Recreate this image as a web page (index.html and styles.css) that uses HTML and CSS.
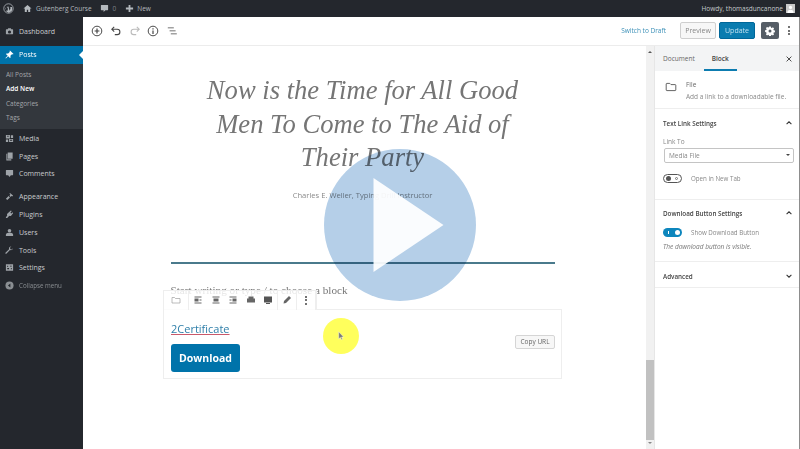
FILE: index.html
```html
<!DOCTYPE html>
<html lang="en">
<head>
    <meta charset="UTF-8">
    <title>Edit Post - Gutenberg Course</title>
    <link rel="stylesheet" href="styles.css">
</head>
<body>
    <div class="page">
        <header class="adminbar">
            <svg class="bar-icon wp" viewBox="0 0 20 20"><circle cx="10" cy="10" r="8.6" fill="none" stroke="currentColor" stroke-width="1.4"/><path d="M3.6 7.5 7 16.6l2-5.6-1.2-3.5H6.7V6.600h4.400v.9h-1.200l2.300 6.800 1.500-4.800c.3-1.200-.4-1.800-1-2.400h3.300c1 1.800 1.300 4.500-.2 7.300L11 17.800H9.400L8.900 17 3.600 10z" fill="currentColor"/></svg>
            <svg class="bar-icon home" viewBox="0 0 20 20"><path d="M10 2 1 10h3v8h4.500v-5h3v5H16v-8h3z" fill="currentColor"/></svg>
            <span class="bar-text site">Gutenberg Course</span>
            <svg class="bar-icon bubble" viewBox="0 0 20 20"><path d="M3 2h14a1 1 0 0 1 1 1v10a1 1 0 0 1-1 1h-5l-4 4v-4H3a1 1 0 0 1-1-1V3a1 1 0 0 1 1-1z" fill="currentColor"/></svg>
            <span class="bar-text count">0</span>
            <svg class="bar-icon plus" viewBox="0 0 20 20"><path d="M8 2h4v6h6v4h-6v6H8v-6H2V8h6z" fill="currentColor"/></svg>
            <span class="bar-text">New</span>
            <span class="howdy">Howdy, thomasduncanone</span>
            <span class="avatar"><svg viewBox="0 0 20 20"><circle cx="10" cy="7.500" r="3.500" fill="#fff"/><path d="M3 20c0-6 3-7.500 7-7.500s7 1.500 7 7.500z" fill="#fff"/></svg></span>
        </header>

        <div class="workspace">
            <nav class="adminmenu">
                <a class="menu-item">
                    <svg viewBox="0 0 20 20"><path d="M3 5h3l1-2h6l1 2h3a1 1 0 0 1 1 1v9a1 1 0 0 1-1 1H3a1 1 0 0 1-1-1V6a1 1 0 0 1 1-1zm7 2.500a3.500 3.500 0 1 0 0 7 3.500 3.500 0 0 0 0-7z" fill="currentColor"/></svg>
                    Dashboard
                </a>
                <a class="menu-item active">
                    <svg viewBox="0 0 20 20"><path d="M11 1l8 8-2 1-1-1-4 4 .5 3.500-1.500 1.500-4-4-5 5-1-1 5-5-4-4 1.500-1.500L7 8l4-4-1-1z" fill="currentColor"/></svg>
                    Posts
                </a>
                <div class="submenu">
                    <a>All Posts</a>
                    <a class="current">Add New</a>
                    <a>Categories</a>
                    <a>Tags</a>
                </div>
                <a class="menu-item">
                    <svg viewBox="0 0 20 20"><path d="M2 2h9v8H2zm3 2v2h3V4zM9 11h9v7H9zm2 2v2h5v-2zM13 3h5v6h-5zM2 12h5v6H2z" fill="currentColor"/></svg>
                    Media
                </a>
                <a class="menu-item">
                    <svg viewBox="0 0 20 20"><path d="M6 1h11v14H6zM3 4h2v12h9v3H3z" fill="currentColor"/></svg>
                    Pages
                </a>
                <a class="menu-item">
                    <svg viewBox="0 0 20 20"><path d="M3 2h14a1 1 0 0 1 1 1v10a1 1 0 0 1-1 1h-4l-3 4-3-4H3a1 1 0 0 1-1-1V3a1 1 0 0 1 1-1z" fill="currentColor"/></svg>
                    Comments
                </a>
                <a class="menu-item group-start">
                    <svg viewBox="0 0 20 20"><path d="M11 2l7 6-2 2-2-1-2 2-2-3 2-2-2-2zM8 9l3 3-6 6-3-3z" fill="currentColor"/></svg>
                    Appearance
                </a>
                <a class="menu-item">
                    <svg viewBox="0 0 20 20"><path d="M13 1l2 1-3 4 2 2 3-3 1 2-4 5c-1 1.500-3 2-4.500 1L5 18H2v-2l3-4c-1-2-.5-3.500.5-4.500z" fill="currentColor"/></svg>
                    Plugins
                </a>
                <a class="menu-item">
                    <svg viewBox="0 0 20 20"><circle cx="10" cy="6" r="4" fill="currentColor"/><path d="M2 18v-3c0-3 3-4 5-4.500h6c2 .5 5 1.500 5 4.500v3z" fill="currentColor"/></svg>
                    Users
                </a>
                <a class="menu-item">
                    <svg viewBox="0 0 20 20"><path d="M18 5l-3 3-3-1-1-3 3-3c-3-.5-6 2-5 6l-8 8c-1 2 1 3 2 2l8-8c4 1 7-2 7-4z" fill="currentColor"/></svg>
                    Tools
                </a>
                <a class="menu-item">
                    <svg viewBox="0 0 20 20"><path d="M2 3h16v14H2zm3 3v3h2V6zm6 0v2h4V6zM5 11v3h4v-3zm8 0v3h2v-3z" fill="currentColor" fill-rule="evenodd"/></svg>
                    Settings
                </a>
                <a class="menu-item collapse">
                    <svg viewBox="0 0 20 20"><circle cx="10" cy="10" r="9" fill="currentColor"/><path d="M12 5.500v9L6.500 10z" fill="#23282d"/></svg>
                    Collapse menu
                </a>
            </nav>

            <main class="editor">
                <div class="toolbar">
                    <svg class="tool" viewBox="0 0 20 20"><circle cx="10" cy="10" r="8" fill="none" stroke="#444" stroke-width="1.600"/><path d="M9 6h2v3h3v2h-3v3H9v-3H6V9h3z" fill="#444"/></svg>
                    <svg class="tool" viewBox="0 0 20 20"><path d="M7 3 3 7l4 4M3.500 7H12a4 4 0 0 1 0 9H8" fill="none" stroke="#444" stroke-width="1.800"/></svg>
                    <svg class="tool" viewBox="0 0 20 20"><path d="m13 3 4 4-4 4M16.500 7H8a4 4 0 0 0 0 9h4" fill="none" stroke="#bbb" stroke-width="1.800"/></svg>
                    <svg class="tool" viewBox="0 0 20 20"><circle cx="10" cy="10" r="8" fill="none" stroke="#444" stroke-width="1.600"/><path d="M9 9h2v6H9zM9 5.500h2v2H9z" fill="#444"/></svg>
                    <svg class="tool" viewBox="0 0 20 20"><path d="M3 4h10v1.600H3zM6 9h10v1.600H6zM8 14h10v1.600H8z" fill="#444"/></svg>
                    <a class="switch-draft">Switch to Draft</a>
                    <button class="btn preview">Preview</button>
                    <button class="btn update">Update</button>
                    <button class="gear">
                        <svg viewBox="0 0 20 20"><path fill-rule="evenodd" d="M8.300 1h3.400l.5 2.500 1.500.6 2.100-1.400 2.400 2.400-1.400 2.100.6 1.500 2.500.5v3.400l-2.500.5-.6 1.500 1.400 2.100-2.400 2.400-2.100-1.400-1.500.6-.5 2.500H8.300l-.5-2.500-1.500-.6-2.100 1.400-2.400-2.400 1.400-2.100-.6-1.500L.1 11.700V8.300l2.500-.5.6-1.500-1.400-2.100 2.400-2.400 2.100 1.400 1.500-.6zM10 7a3 3 0 1 0 0 6 3 3 0 0 0 0-6z" fill="#fff"/></svg>
                    </button>
                    <span class="dots"><i></i><i></i><i></i></span>
                </div>

                <div class="panes">
                    <div class="content">
                        <h1 class="title">Now is the Time for All Good Men To Come to The Aid of Their Party</h1>
                        <p class="author">Charles E. Weller, Typing Drill Instructor</p>
                        <hr class="rule">
                        <p class="prompt">Start writing or type / to choose a block</p>
                        <div class="file-block">
                            <div class="block-tools">
                                <span class="tool-group">
                                    <svg viewBox="0 0 20 20"><path d="M2 5h5l2 2h9v9H2z" fill="none" stroke="#999" stroke-width="1.300"/></svg>
                                </span>
                                <span class="tool-group wide">
                                    <svg viewBox="0 0 20 20"><path d="M3 3h14v2H3zM3 15h14v2H3zM3 7h8v6H3zM13 8h4v1h-4zM13 11h4v1h-4z" fill="#666"/></svg>
                                    <svg viewBox="0 0 20 20"><path d="M3 3h14v2H3zM3 15h14v2H3zM5 7h10v6H5z" fill="#666"/></svg>
                                    <svg viewBox="0 0 20 20"><path d="M3 3h14v2H3zM3 15h14v2H3zM9 7h8v6H9zM3 8h4v1H3zM3 11h4v1H3z" fill="#666"/></svg>
                                    <svg viewBox="0 0 20 20"><path d="M5 3h10v4h3v8H2V7h3zM2 9h16v2H2z" fill="#666"/></svg>
                                    <svg viewBox="0 0 20 20"><path d="M2 3h16v12H2zM6 16h8v2H6z" fill="#555"/></svg>
                                </span>
                                <span class="tool-group">
                                    <svg viewBox="0 0 20 20"><path d="M14 2l4 4-10 10-5 1 1-5z" fill="#666"/></svg>
                                </span>
                                <span class="tool-group">
                                    <span class="dots block-dots"><i></i><i></i><i></i></span>
                                </span>
                            </div>
                            <div class="file-main">
                                <div>
                                    <a class="file-link">2Certificate</a>
                                    <button class="download">Download</button>
                                </div>
                                <button class="copy-url">Copy URL</button>
                            </div>
                        </div>
                    </div>

                    <div class="scrollbar">
                        <span class="arrow up"></span>
                        <span class="thumb"></span>
                        <span class="arrow down"></span>
                    </div>

                    <aside class="inspector">
                        <div class="tabs">
                            <span class="tab">Document</span>
                            <span class="tab selected">Block</span>
                            <svg class="close" viewBox="0 0 20 20"><path d="M4 4l12 12M16 4 4 16" stroke="#444" stroke-width="2.400"/></svg>
                        </div>
                        <div class="block-card">
                            <svg viewBox="0 0 20 20"><path d="M2 5a1 1 0 0 1 1-1h5l2 2h7a1 1 0 0 1 1 1v8a1 1 0 0 1-1 1H3a1 1 0 0 1-1-1z" fill="none" stroke="#555" stroke-width="1.500"/></svg>
                            <div>
                                <div class="card-name">File</div>
                                <div class="card-desc">Add a link to a downloadable file.</div>
                            </div>
                        </div>
                        <section class="panel first">
                            <h2>Text Link Settings <svg viewBox="0 0 20 20"><path d="m4 13 6-6 6 6" fill="none" stroke="#333" stroke-width="2.600"/></svg></h2>
                            <label class="field-label">Link To</label>
                            <div class="select">Media File<span class="caret"></span></div>
                            <div class="toggle-row"><span class="toggle off"><i></i></span>Open in New Tab</div>
                        </section>
                        <section class="panel second">
                            <h2>Download Button Settings <svg viewBox="0 0 20 20"><path d="m4 13 6-6 6-6" fill="none" stroke="#333" stroke-width="0"/><path d="m4 13 6-6 6 6" fill="none" stroke="#333" stroke-width="2.600"/></svg></h2>
                            <div class="toggle-row"><span class="toggle on"><i></i></span>Show Download Button</div>
                            <p class="help">The download button is visible.</p>
                        </section>
                        <section class="panel third">
                            <h2>Advanced <svg viewBox="0 0 20 20"><path d="m4 7 6 6 6-6" fill="none" stroke="#333" stroke-width="2.600"/></svg></h2>
                        </section>
                    </aside>
                </div>
            </main>
        </div>
    </div>

    <div class="play-circle"></div>
    <svg class="play-arrow" viewBox="0 0 70 94"><path d="M0 0 70 47 0 94z"/></svg>
    <div class="cursor-spot">
        <svg viewBox="0 0 10 14"><path d="M1 1v10l2.500-2 1.500 3.500 1.500-.7L5 8.500h3z" fill="#777" stroke="#fff" stroke-width=".6"/></svg>
    </div>
</body>
</html>
```

FILE: styles.css
```css
html, body {
    margin: 0;
    padding: 0;
    height: 100%;
    overflow: hidden;
    background: #fff;
}

body {
    position: relative;
    font-family: 'Open Sans', 'Noto Sans', sans-serif;
    color: #555d66;
}

.page {
    height: 449px;
    display: flex;
    flex-direction: column;
    filter: blur(0.35px);
}

button {
    font-family: inherit;
    padding: 0;
    margin: 0;
}

/* top admin bar */
.adminbar {
    height: 17px;
    flex: none;
    display: flex;
    align-items: center;
    background: #24272d;
    color: #b4b9be;
    font-size: 6.5px;
}

.bar-icon {
    width: 9px;
    height: 9px;
    flex: none;
}

.bar-icon.wp {
    width: 11px;
    height: 11px;
    margin-left: 3px;
}

.bar-icon.home {
    margin-left: 9px;
}

.bar-text.site {
    margin-left: 4px;
}

.bar-icon.bubble {
    margin-left: 8px;
}

.bar-text.count {
    margin-left: 4px;
    color: #7d8288;
}

.bar-icon.plus {
    margin-left: 9px;
    margin-right: 3px;
}

.howdy {
    margin-left: auto;
    color: #c6c9cc;
}

.avatar {
    width: 9px;
    height: 9px;
    margin: 0 5px 0 3px;
    background: #c9c9c9;
    display: flex;
}

.avatar svg {
    width: 9px;
    height: 9px;
}

.workspace {
    flex: 1;
    display: flex;
    min-height: 0;
}

/* left menu */
.adminmenu {
    width: 83px;
    flex: none;
    background: #24272d;
    padding-top: 6px;
    color: #d5d7d9;
    font-size: 7px;
}

.menu-item {
    height: 17.8px;
    display: flex;
    align-items: center;
    gap: 5px;
    padding-left: 5px;
    color: #c9cbce;
}

.menu-item svg {
    width: 9px;
    height: 9px;
    color: #9ea3a8;
    flex: none;
}

.menu-item.active {
    position: relative;
    height: 18px;
    margin-top: 5px;
    background: #0073aa;
    color: #fff;
}

.menu-item.active svg {
    color: #fff;
}

.menu-item.active::after {
    content: "";
    position: absolute;
    right: 0;
    top: 5px;
    border: 4px solid transparent;
    border-right-color: #fff;
}

.submenu {
    background: #33373d;
    padding: 4px 0 4px 6px;
    font-size: 6.5px;
    color: #a3a6aa;
}

.submenu a {
    display: block;
    height: 14.4px;
    line-height: 14.4px;
}

.submenu .current {
    color: #fff;
    font-weight: 600;
}

.menu-item.group-start {
    margin-top: 5px;
}

.menu-item.collapse {
    font-size: 6.2px;
    color: #8a8e92;
}

.menu-item.collapse svg {
    color: #8a8e92;
}

/* editor column */
.editor {
    flex: 1;
    min-width: 0;
    display: flex;
    flex-direction: column;
    border-right: 1px solid #8d8d8d;
}

.toolbar {
    height: 29px;
    flex: none;
    box-sizing: border-box;
    border-bottom: 1px solid #ececec;
    display: flex;
    align-items: center;
    padding: 0 0 1px 8px;
}

.tool {
    width: 12px;
    height: 12px;
    margin-right: 6.800px;
    flex: none;
}

.switch-draft {
    margin-left: auto;
    color: #3a8fb7;
    font-size: 6.5px;
}

.btn {
    height: 17px;
    width: 36px;
    font-size: 7px;
    border-radius: 2px;
}

.btn.preview {
    margin-left: 14px;
    background: #f7f7f7;
    border: 1px solid #cfcfcf;
    color: #888;
}

.btn.update {
    margin-left: 3px;
    background: #0a7cb0;
    border: 1px solid #006799;
    color: #bfe0ef;
}

.gear {
    width: 18px;
    height: 17px;
    margin-left: 6px;
    background: #555d66;
    border: 0;
    border-radius: 2px;
    display: flex;
    align-items: center;
    justify-content: center;
}

.gear svg {
    width: 10px;
    height: 10px;
}

.dots {
    display: flex;
    flex-direction: column;
    gap: 1.500px;
    width: 2px;
    margin: 0 9px 0 9px;
}

.dots i {
    display: block;
    width: 2px;
    height: 2px;
    border-radius: 50%;
    background: #444;
}

.panes {
    flex: 1;
    display: flex;
    min-height: 0;
}

/* document area */
.content {
    flex: 1;
    min-width: 0;
    padding: 28px 4px 0 0;
}

.title {
    width: 340px;
    margin: 0 auto;
    font: italic 400 26.6px/33.500px 'Liberation Serif', serif;
    text-align: center;
    color: #757575;
}

.author {
    margin: 14px 0 0;
    text-align: center;
    font-size: 7.600px;
    line-height: 12px;
    color: #8a8a8a;
}

.rule {
    width: 384px;
    height: 2px;
    margin: 61px auto 0;
    border: 0;
    background: #4a7a8c;
}

.prompt {
    width: 384px;
    margin: 18px auto 0;
    font: 400 11.2px/16px 'Liberation Serif', serif;
    color: #777;
}

.file-block {
    position: relative;
    width: 399px;
    height: 70px;
    margin: 11px 0 0 80px;
    box-sizing: border-box;
    border: 1px solid #eee;
}

.block-tools {
    position: absolute;
    left: -1px;
    top: -20px;
    height: 19px;
    display: flex;
    background: rgba(255, 255, 255, 0.82);
    border: 1px solid #eee;
    border-bottom: 0;
}

.tool-group {
    display: flex;
    align-items: center;
    padding: 0 4px;
    gap: 7.6px;
    border-right: 1px solid #eee;
}

.tool-group:first-child {
    padding: 0 7px;
}

.tool-group svg {
    width: 10px;
    height: 10px;
    flex: none;
}

.block-dots {
    margin: 0 4px;
}

.file-main {
    height: 100%;
    box-sizing: border-box;
    display: flex;
    align-items: flex-start;
    justify-content: space-between;
    padding: 11px 6px 0 7px;
}

.file-link {
    display: block;
    font-size: 11px;
    line-height: 15px;
    color: #2f7fa9;
    text-decoration: underline;
    text-decoration-color: #c9596a;
}

.download {
    display: block;
    width: 69px;
    height: 28px;
    margin-top: 8px;
    background: #0073aa;
    border: 0;
    border-radius: 3px;
    color: #fff;
    font-size: 10.500px;
    font-weight: 700;
}

.copy-url {
    width: 40px;
    height: 14px;
    margin-top: 14px;
    background: #f7f7f7;
    border: 1px solid #d5d5d5;
    border-radius: 2px;
    color: #666;
    font-size: 6.500px;
}

/* fake browser scrollbar */
.scrollbar {
    width: 8px;
    flex: none;
    margin-left: 0;
    background: #f1f1f1;
    display: flex;
    flex-direction: column;
    align-items: center;
    padding: 3px 0;
    box-sizing: border-box;
}

.arrow {
    border: 2px solid transparent;
    flex: none;
}

.arrow.up {
    border-bottom-color: #555;
}

.arrow.down {
    border-top-color: #888;
}

.thumb {
    width: 100%;
    height: 80px;
    margin-top: auto;
    margin-bottom: 2px;
    background: #c1c1c1;
}

/* settings sidebar */
.inspector {
    width: 144px;
    flex: none;
    border-left: 1px solid #e6e6e6;
    font-size: 6.5px;
}

.tabs {
    height: 25px;
    position: relative;
    display: flex;
    align-items: center;
    background: #f3f4f5;
    padding-left: 8px;
    gap: 17px;
    box-sizing: border-box;
}

.tab {
    line-height: 25px;
    color: #666;
}

.tab.selected {
    position: relative;
    font-weight: 600;
    color: #444;
}

.tab.selected::after {
    content: "";
    position: absolute;
    left: -8px;
    right: -8px;
    bottom: 0;
    height: 2px;
    background: #0d7cb0;
}

.close {
    position: absolute;
    right: 6px;
    top: 9px;
    width: 8px;
    height: 8px;
}

.block-card {
    height: 38px;
    box-sizing: border-box;
    display: flex;
    gap: 9px;
    padding: 9px 0 0 10px;
    border-bottom: 1px solid #eee;
}

.block-card svg {
    width: 12px;
    height: 12px;
    flex: none;
    margin-top: 1px;
}

.card-name {
    line-height: 10px;
    color: #666;
}

.card-desc {
    margin-top: 2px;
    line-height: 10px;
    color: #888;
    white-space: nowrap;
}

.panel {
    box-sizing: border-box;
    padding: 0 7px 0 8px;
    border-bottom: 1px solid #eee;
}

.panel.first {
    height: 91px;
    padding-top: 1px;
}

.panel.second {
    height: 62px;
}

.panel.third {
    height: 26px;
    padding-top: 1px;
}

.panel h2 {
    height: 26px;
    margin: 0;
    display: flex;
    align-items: center;
    justify-content: space-between;
    font-size: 6.3px;
    font-weight: 600;
    color: #444;
}

.panel h2 svg {
    width: 8px;
    height: 8px;
    margin-right: -1px;
}

.field-label {
    display: block;
    line-height: 10px;
    margin-top: 1px;
    color: #888;
}

.select {
    position: relative;
    width: 130px;
    height: 15px;
    margin: 1px 0 0 1px;
    box-sizing: border-box;
    border: 1px solid #c4c4c4;
    border-radius: 2px;
    padding-left: 4px;
    line-height: 13px;
    color: #888;
}

.caret {
    position: absolute;
    right: 3px;
    top: 5px;
    border: 2px solid transparent;
    border-top-color: #444;
}

.toggle-row {
    display: flex;
    align-items: center;
    gap: 9px;
    font-size: 6.2px;
    color: #888;
}

.first .toggle-row {
    margin-top: 11px;
}

.second .toggle-row {
    margin-top: 2px;
}

.toggle {
    width: 19px;
    height: 9px;
    box-sizing: border-box;
    border-radius: 5px;
    position: relative;
    flex: none;
}

.toggle i {
    position: absolute;
    top: 1px;
    width: 5px;
    height: 5px;
    border-radius: 50%;
}

.toggle.off {
    border: 1px solid #555;
    background: #fff;
}

.toggle.off i {
    left: 2px;
    background: #555;
}

.toggle.off::after {
    content: "";
    position: absolute;
    right: 3px;
    top: 2px;
    width: 3px;
    height: 3px;
    box-sizing: border-box;
    border: 1px solid #777;
    border-radius: 50%;
}

.toggle.on {
    background: #0d86bd;
}

.toggle.on i {
    right: 2px;
    top: 2px;
    background: #fff;
}

.toggle.on::after {
    content: "";
    position: absolute;
    left: 5px;
    top: 3px;
    width: 1px;
    height: 3px;
    background: #fff;
}

.help {
    margin: 5px 0 0;
    font-style: italic;
    font-size: 6.500px;
    line-height: 10px;
    color: #777;
}

/* video overlay */
.play-circle {
    position: absolute;
    left: 324px;
    top: 149px;
    width: 152px;
    height: 152px;
    border-radius: 50%;
    background: #b5cfe8;
    mix-blend-mode: multiply;
}

.play-arrow {
    position: absolute;
    left: 373px;
    top: 178px;
    width: 71px;
    height: 94px;
    fill: rgba(255, 255, 255, 0.93);
}

.cursor-spot {
    position: absolute;
    left: 323px;
    top: 318px;
    width: 36px;
    height: 36px;
    border-radius: 50%;
    background: #ffff5c;
    display: flex;
    align-items: center;
    justify-content: center;
    mix-blend-mode: multiply;
}

.cursor-spot svg {
    width: 7px;
    height: 10px;
}
```
